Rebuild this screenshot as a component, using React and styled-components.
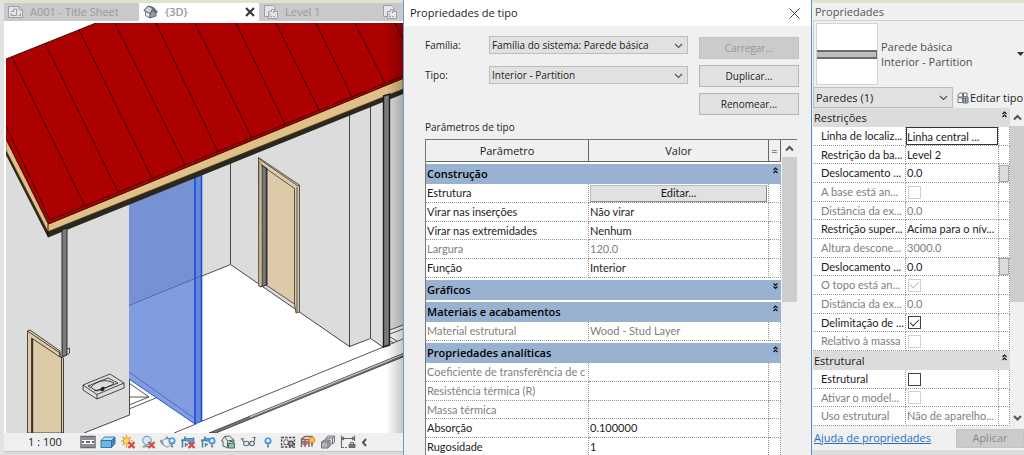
import React from 'react';
import styled, { createGlobalStyle, css } from 'styled-components';

const GlobalStyle = createGlobalStyle`
  * {
    box-sizing: border-box;
  }

  body {
    margin: 0;
    background: #e2e2e2;
    color: #1c1c1c;
    font-family: 'Open Sans', 'Noto Sans', sans-serif;
    font-size: 11px;
    line-height: 16px;
  }

  button, select, input {
    margin: 0;
    color: inherit;
    font: inherit;
  }
`;

const Page = styled.div`
  display: flex;
  height: 100vh;
  min-height: 455px;
  overflow: hidden;
`;

/* ---------- 3D view ---------- */

const ViewArea = styled.section`
  display: flex;
  flex: 1;
  flex-direction: column;
  min-width: 0;
  padding-left: 4px;
  border-top: 3px solid #dde3cd;
`;

const Tabs = styled.nav`
  display: flex;
  height: 20px;
  overflow: hidden;
  background: #c9c9c9;
  border-bottom: 2px solid #fff;
`;

const Tab = styled.button`
  display: flex;
  flex: none;
  align-items: center;
  gap: 6px;
  width: ${(props) => props.$width};
  padding: 0 4px;
  border: 0;
  background: ${(props) => (props.$active ? '#fff' : '#c9c9c9')};
  color: #999;
  font-weight: ${(props) => (props.$active ? 600 : 400)};
  white-space: nowrap;

  svg:last-child:not(:first-child) {
    margin-left: auto;
  }
`;

const Scene = styled.svg`
  flex: 1;
  width: 100%;
  min-height: 0;
  background: #fff;
  border-left: 2px solid #fff;
`;

const ViewBar = styled.div`
  display: flex;
  align-items: center;
  gap: 4px;
  height: 18px;
  padding-left: 24px;
  background: #efefef;
`;

const Scale = styled.span`
  width: 48px;
`;

const Tool = styled.button`
  display: flex;
  flex: none;
  padding: 0;
  border: 0;
  background: none;
`;

const ViewFoot = styled.div`
  height: 4px;
  background: #dcdcdc;
  border-top: 1px solid #c4c4c4;
`;

/* ---------- type dialog ---------- */

const Dialog = styled.section`
  display: flex;
  flex: none;
  flex-direction: column;
  width: 409px;
  background: #f0f0f0;
  border-right: 1px solid #5690c4;
  border-left: 1px solid #5ea0d8;
`;

const DialogTitle = styled.header`
  display: flex;
  align-items: center;
  justify-content: space-between;
  height: 26px;
  padding: 0 11px 0 6px;
  background: #fff;

  h1 {
    margin: 0;
    font-size: 11px;
    font-weight: 400;
  }
`;

const CloseButton = styled.button`
  display: flex;
  padding: 0;
  border: 0;
  background: none;
`;

const DialogBody = styled.div`
  flex: 1;
  min-height: 0;
  padding: 10px 12px 0 21px;
  overflow: hidden;
`;

const TypeForm = styled.div`
  display: flex;
  gap: 11px;
  font-size: 10px;
`;

const Fields = styled.div`
  display: flex;
  flex: 1;
  flex-direction: column;
  gap: 12px;
`;

const Field = styled.label`
  display: flex;
  align-items: center;

  span {
    width: 64px;
  }
`;

const SelectBox = styled.span`
  display: flex;
  flex: 1;
  align-items: center;
  height: ${(props) => props.$height};
  background: #e1e1e1;
  border: 1px solid #bdbdbd;

  select {
    flex: 1;
    width: 100%;
    height: 100%;
    padding: 0 0 0 2px;
    border: 0;
    outline: 0;
    appearance: none;
    background: none;
  }

  svg {
    flex: none;
    margin: 0 4px;
    pointer-events: none;
  }
`;

const Buttons = styled.div`
  display: flex;
  flex-direction: column;
  gap: 6px;
  width: 100px;
  padding-top: 1px;
`;

const DialogButton = styled.button`
  height: 22px;
  padding: 0;
  background: #e1e1e1;
  border: 1px solid #b5b5b5;

  &:disabled {
    background: #cbcbcb;
    border-color: #c4c4c4;
    color: #969696;
  }
`;

const TableLabel = styled.p`
  margin: 4px 0;
  font-size: 10px;
`;

const TableFrame = styled.div`
  display: flex;
  gap: 1px;
  width: 372px;
  border-top: 1px solid #777;
  border-left: 1px solid #777;
`;

const cell = css`
  height: 19px;
  overflow: hidden;
  border-right: 1px dotted #999;
  border-bottom: 1px dotted #999;
  font-family: Lato, sans-serif;
  line-height: 16px;
  white-space: nowrap;
`;

const ParamTable = styled.table`
  flex: 1;
  width: 100%;
  min-width: 0;
  table-layout: fixed;
  border-spacing: 0;
  background: #fff;

  thead th {
    height: 22px;
    padding: 0;
    background: #f0f0f0;
    border-right: 1px solid #666;
    border-bottom: 1px solid #666;
    font-weight: 400;
  }

  tbody th {
    height: 22px;
    padding: 0 3px 0 1px;
    background: #9ab2d1;
    border-top: 2px solid #fff;
    color: #000;
    font-weight: 600;
    text-align: left;
  }

  td {
    padding: 0 1px;
    ${cell}
  }

  tr:nth-child(4) td {
    height: 18px;
  }
`;

const ParamRow = styled.tr`
  color: ${(props) => (props.$muted ? '#808080' : '#1c1c1c')};
`;

const GroupTitle = styled.span`
  display: flex;
  align-items: center;
  justify-content: space-between;

  button {
    display: flex;
    align-self: flex-start;
    padding: 1px 0 0;
    border: 0;
    background: none;
  }
`;

const EditButton = styled.button`
  display: block;
  width: 100%;
  height: 17px;
  padding: 0;
  background: #e1e1e1;
  border: 1px solid #bbb;
  border-right-color: #888;
  border-bottom-color: #888;
  line-height: 14px;
`;

const ScrollTrack = styled.div`
  flex: none;
  width: 15px;
  background: #f0f0f0;

  svg {
    display: block;
    margin: 4px auto 4px;
  }
`;

const ScrollThumb = styled.div`
  height: ${(props) => props.$height};
  background: #cdcdcd;
`;

/* ---------- properties palette ---------- */

const Palette = styled.aside`
  display: flex;
  flex: none;
  flex-direction: column;
  width: 212px;
  padding-left: 1px;
  background: #f0f0f0;
  border-top: 3px solid #dde3cd;
  border-bottom: 5px solid #dcdcdc;
`;

const PaletteTitle = styled.h2`
  height: 18px;
  margin: 0;
  padding: 1px 2px;
  border-bottom: 1px solid #d0d0d0;
  color: #555;
  font-size: 11px;
  font-weight: 400;
`;

const TypePicker = styled.div`
  display: flex;
  align-items: center;
  gap: 3px;
  height: 66px;
  padding: 0 0 0 2px;
  border-left: 1px solid #d0d0d0;
  color: #4f4f4f;

  p {
    flex: 1;
    margin: 0;
    line-height: 15px;
  }
`;

const Preview = styled.div`
  display: flex;
  align-items: center;
  width: 62px;
  height: 62px;
  background: #fff;
  border: 1px solid #d3d3d3;
`;

const WallSection = styled.div`
  width: 100%;
  height: 9px;
  background: #bdbdbd;
  border: solid #6d6d6d;
  border-width: 2px 1px 2px 0;
`;

const FilterRow = styled.div`
  display: flex;
  align-items: center;
  gap: 4px;
  height: 21px;

  label {
    display: flex;
    width: 140px;
  }
`;

const EditType = styled.button`
  display: flex;
  align-items: center;
  gap: 1px;
  padding: 0;
  border: 0;
  background: none;
  white-space: nowrap;
`;

const PaletteGrid = styled.div`
  display: flex;
  flex: 1;
  min-height: 0;
  overflow: hidden;
`;

const PropTable = styled.table`
  flex: 1;
  align-self: flex-start;
  width: 100%;
  min-width: 0;
  table-layout: fixed;
  border-spacing: 0;
  background: #fff;

  th {
    height: 19px;
    padding: 0 3px 0 1px;
    background: #dcdcdc;
    font-weight: 400;
    text-align: left;
  }

  td {
    padding: 0;
    ${cell}
  }

  td:first-child {
    padding-left: 8px;
  }

  output {
    padding-left: 1px;
  }

  tr:nth-child(3n) td {
    height: 18px;
  }
`;

const CellInput = styled.input`
  display: block;
  width: 100%;
  height: 18px;
  padding: 0;
  background: #fff;
  border: 1px solid #333;
  outline: 0;
`;

const CellButton = styled.button`
  display: block;
  width: 100%;
  height: 17px;
  padding: 0;
  background: #dcdcdc;
  border: 1px solid #aaa;
`;

const Check = styled.input`
  display: grid;
  place-items: center;
  width: 13px;
  height: 13px;
  appearance: none;
  background: #fff;
  border: 1px solid #444;

  td > & {
    margin-left: 2px;
  }

  &:disabled {
    border-color: #d0d0d0;
  }

  &:checked::after {
    width: 8px;
    height: 4px;
    margin-bottom: 3px;
    border: solid #333;
    border-width: 0 0 1px 1px;
    content: '';
    transform: rotate(-45deg);
  }

  &:disabled:checked::after {
    border-color: #bbb;
  }
`;

const PaletteScroll = styled(ScrollTrack)`
  display: flex;
  flex-direction: column;
  width: 14px;

  svg {
    margin: 5px auto 4px;
  }

  svg:last-child {
    margin-top: auto;
  }
`;

const PaletteFoot = styled.footer`
  display: flex;
  flex: none;
  align-items: center;
  justify-content: space-between;
  height: 24px;
  padding-left: 1px;

  a {
    color: #1c6fc4;
  }
`;

const ApplyButton = styled.button`
  width: 68px;
  height: 19px;
  padding: 0;
  background: #cbcbcb;
  border: 1px solid #c4c4c4;
  color: #8a8a8a;
`;

/* ---------- small icons ---------- */

const Chevron = ({ up, left, color = '#555', bold }) => (
  <svg width="9" height="9" viewBox="0 0 9 9" fill="none" stroke={color} strokeWidth={bold ? 2 : 1.2} aria-hidden="true">
    <path d={left ? 'M6 1L3 4.500L6 8' : up ? 'M1 6.500L4.500 3L8 6.500' : 'M1 3L4.500 6.500L8 3'} />
  </svg>
);

const DoubleChevron = ({ down }) => (
  <svg width="5" height="7" viewBox="0 0 5 7" fill="none" stroke="#111" strokeWidth="1.200" aria-hidden="true">
    <path d={down ? 'M.5 .5L2.500 2.500L4.500 .5M.5 3.500L2.500 5.500L4.500 3.500' : 'M.5 3L2.500 1L4.500 3M.5 6L2.500 4L4.500 6'} />
  </svg>
);

const SheetIcon = () => (
  <svg width="16" height="14" viewBox="0 0 16 14" fill="#e4e6ea" stroke="#9a9ea6" aria-hidden="true">
    <path d="M.5 1.500H11L14.500 5V12.500H.5Z" />
    <path d="M11 1.500V5H14.500M3 8V10.500H8.500V4H5.500V6.500H3M10.500 10.500H12.500V8" fill="none" />
  </svg>
);

const HouseIcon = () => (
  <svg width="16" height="14" viewBox="0 0 16 14" stroke="#555" strokeWidth=".8" aria-hidden="true">
    <path d="M2.500 6V10.500L7 13V8Z" fill="#eee" />
    <path d="M7 8L10 4.500L13 7V11L7 13Z" fill="#8f9bab" />
    <path d="M1 5.500L5 1L10.500 2.500L14.500 7L12.500 8L9.800 5L7 8.500Z" fill="#737b86" />
    <path d="M1 5.500L5 1L9.800 3.500L7 8.500Z" fill="#cfd3d9" />
  </svg>
);

const PlanIcon = () => (
  <svg width="16" height="14" viewBox="0 0 16 14" fill="#e4e6ea" stroke="#9a9ea6" aria-hidden="true">
    <path d="M1.500 .5H10L12 2.500V11.500H1.500Z" />
    <path d="M5.500 6.500H8.500V4.500H11.500V6.500H14.500V13.500H5.500Z" />
    <path d="M7 8.500V11.500H13M10.500 6V9" fill="none" strokeDasharray="2 1" />
  </svg>
);

const CloseTabIcon = () => (
  <svg width="10" height="10" viewBox="0 0 10 10" stroke="#333" strokeWidth="2" aria-hidden="true">
    <path d="M1 1L9 9M9 1L1 9" />
  </svg>
);

const CloseIcon = () => (
  <svg width="11" height="11" viewBox="0 0 11 11" stroke="#444" aria-hidden="true">
    <path d="M.5 .5L10.500 10.500M10.500 .5L.5 10.500" />
  </svg>
);

const EditTypeIcon = () => (
  <svg width="12" height="12" viewBox="0 0 12 12" fill="#fff" stroke="#5a6270" strokeWidth=".9" aria-hidden="true">
    <path d="M1 3L3 1H5.500V5H1ZM6.500 1H10V5H6.500ZM1 6H5.500V10.500H1Z" />
    <path d="M6 5H11V11H6Z" fill="#d5deec" />
    <path d="M6 7H11M6 9H11M8.500 5V11" />
  </svg>
);

const RedCross = () => <path d="M8.500 8L14.500 14M14.500 8L8.500 14" stroke="#dc4840" strokeWidth="2.400" />;

const Bulb = ({ x = 0 }) => (
  <g transform={`translate(${x} 0)`}>
    <circle cx="8" cy="7" r="3.200" fill="#62aeee" stroke="#3b86c8" strokeWidth=".8" />
    <circle cx="8" cy="6.500" r="1.500" fill="#e9f6ff" />
    <path d="M7 11H9M7 12.700H9" stroke="#666" strokeWidth="1.200" />
  </g>
);

const CropFrame = () => (
  <g fill="none">
    <path d="M2.500 13.500V6H5M5 2.500V5M5 10.500H8M13.500 3.500V7" stroke="#6a7887" strokeWidth="1.600" />
    <path d="M5 4.500H13.500V9H10V7H5Z" fill="#5da6e3" stroke="#2f78b6" strokeWidth=".8" />
    <path d="M1 6.500H4.500M5.500 9V13" stroke="#3f86c0" strokeWidth="1.400" />
  </g>
);

const viewTools = [
  ['Nível de detalhe', (
    <g>
      <path d="M1 2.500H15V13.500H1Z" fill="#fff" stroke="#666" strokeWidth="1.400" />
      <path d="M2 3H14V6H2ZM2 10H14V13H2Z" fill="#8a8f96" />
      <path d="M2 7H4V9H2ZM6 7H10V9H6ZM12 7H14V9H12Z" fill="#666" />
    </g>
  )],
  ['Estilo visual', (
    <g stroke="#2c6d9d" strokeWidth=".9">
      <path d="M1 6.500L4.500 3H15L11.500 6.500Z" fill="#b9e1f5" />
      <path d="M1 6.500H11.500V13.500H1Z" fill="#6bb8e4" />
      <path d="M11.500 6.500L15 3V9.500L11.500 13.500Z" fill="#3d88bb" />
    </g>
  )],
  ['Caminho do sol', (
    <g>
      <path d="M6.500 1V3M1 7H3M2.500 3L4 4.500M10.500 3L9 4.500M2.500 11L4 9.500M6.500 11V13.500M11 6.500H12.500" stroke="#d89a2a" strokeWidth="1.200" />
      <circle cx="6.500" cy="7" r="3.200" fill="#ffd76a" stroke="#dc9c2b" />
      <RedCross />
    </g>
  )],
  ['Sombras', (
    <g>
      <path d="M2 13.500C3 10.500 8 10.500 11 13Z" fill="#8d949c" />
      <circle cx="7" cy="6.500" r="4.300" fill="#d3e9f8" stroke="#4e8ebd" />
      <RedCross />
    </g>
  )],
  ['Renderização', (
    <g>
      <path d="M2.500 6.500C2.500 15 11.500 15 11.500 6.500C9 4 5 4 2.500 6.500ZM2.500 7.500L.5 6L1 9L3.500 11M6 4.500L7 2.500L8.500 4.500" fill="#e8eef3" stroke="#7b838b" />
      <Bulb x={4} />
    </g>
  )],
  ['Cortar vista', <g><CropFrame /><RedCross /></g>],
  ['Região de recorte', <g><CropFrame /><Bulb x={4} /></g>],
  ['Vista 3D bloqueada', (
    <g stroke="#59616a">
      <path d="M1.500 7L4.500 2.500L9.500 2L14 6V10L8 14L3 12V7Z" fill="#e7eaee" />
      <path d="M4.500 2.500L7.500 7V13M7.500 7L14 6" fill="none" />
      <path d="M8.500 9.500H14.500V14H8.500Z" fill="#8fc4ab" stroke="#3f7a64" />
      <path d="M10 9.500V7.500H13V9.500" fill="none" stroke="#3f7a64" />
    </g>
  )],
  ['Isolar temporariamente', (
    <g fill="#dceefa" stroke="#5d6b78" strokeWidth="1.100">
      <path d="M4 8L1.500 5L4 4.500M9 9.500L10 9M14 8L15 3.500L12.500 3.500" fill="none" />
      <ellipse cx="6.300" cy="9.500" rx="2.700" ry="2.200" />
      <ellipse cx="12" cy="9.500" rx="2.300" ry="2.200" />
    </g>
  )],
  ['Revelar elementos', <Bulb />],
  ['Propriedades temporárias', (
    <g fill="none" stroke="#4a4f55" strokeWidth="1.300">
      <path d="M1.500 3.500H14.500V13H1.500Z" fill="#e9e9e9" strokeDasharray="2.500 1.200" />
      <path d="M4 6H8V10.500H4Z" fill="#fff" strokeWidth=".8" />
      <circle cx="11" cy="9.500" r="2.300" fill="#aaa" />
    </g>
  )],
  ['Modelo analítico', (
    <g>
      <path d="M1.500 13V5L5 2.500H12V11M1.500 5.500H9V13M5 5.500V13M9 5.500L12 3M1.500 9H9" fill="none" stroke="#7f6a68" strokeWidth="1.500" />
      <path d="M2 7.500H8M3 10.500H7" stroke="#d2554c" strokeWidth="1.200" />
      <circle cx="12" cy="6" r="3" fill="#ffbd45" stroke="#db8727" strokeWidth=".8" />
      <path d="M11 10H13M11 12H13" stroke="#555" />
    </g>
  )],
  ['Conjuntos de deslocamento', (
    <g fill="#dfe1e4" stroke="#707479">
      <path d="M6 4L8 2H14.500V8L12.500 10H6Z" />
      <path d="M1.500 8L4 6H10V12L8 14H1.500Z" fill="#b1b5ba" />
      <path d="M1.500 8H8V14M8 8L10 6M12.500 4V10M6 4H12.500L14.500 2" fill="none" />
    </g>
  )],
  ['Revelar restrições', (
    <g stroke="#666" fill="none">
      <path d="M1.500 1.500V14M14.500 1.500V7M1.500 4.500H14.500M4 3L2 4.500L4 6M12 3L14 4.500L12 6" strokeWidth="1.100" />
      <path d="M2 13.500H8" strokeDasharray="2 1" />
      <path d="M9 10.500H15V13.500H9Z" fill="#777" />
      <path d="M10.500 10.500V8.500H13.500V10.500" />
    </g>
  )],
];

const roofSeams = [
  [12, 57, 85, 206], [45, 43, 118, 192], [79, 30, 152, 178], [115, 23, 185, 165],
  [156, 23, 218, 152], [195, 23, 252, 138], [236, 23, 285, 124], [276, 23, 319, 110],
  [316, 23, 352, 97], [355, 23, 385, 83], [395, 23, 403, 39],
];

const House = () => (
  <Scene viewBox="6 23 397 410" preserveAspectRatio="xMinYMin slice" role="img" aria-label="Vista 3D">
    <defs>
      <linearGradient id="edge" x1="0" x2="1">
        <stop offset="0" stopColor="#000" stopOpacity="0" />
        <stop offset="1" stopColor="#000" stopOpacity=".22" />
      </linearGradient>
    </defs>

    {/* walls */}
    <path d="M129 200L403 85V326L390 330V347L383 347L370 338L350 347L230 264L129 305Z" fill="#dcdcdc" />
    <path d="M6 140L48 234L129 200V415L84 433H6Z" fill="#dcdcdc" />
    <g fill="none" stroke="#333" strokeWidth=".9">
      <path d="M129.500 200V415L84 433M129 305.500L230.500 264.500L349.500 346.500L370.500 338.500L383 347" />
      <path d="M230.500 160V264M349.500 110V347M370.500 100V338" />
    </g>

    {/* floor */}
    <g fill="none" stroke="#444" strokeWidth=".9">
      <path d="M201 421.500L403 339M174 433L196 424M390 330L403 325M390 334L403 329M390 337L397 341M390 341L394 343" />
      <path d="M129 383L149 397L129 405M129 397H149M129 409L157 397.500" />
    </g>
    <path d="M209 433L403 353.500V357L216 433Z" fill="#777" stroke="#222" strokeWidth=".7" />
    <path d="M250 417L403 354.500" stroke="#eee" strokeWidth=".8" />

    {/* inner door */}
    <g stroke="#333" strokeWidth=".8">
      <path d="M258.500 157.500L299.500 185V312L296 313L294.500 304L266 285L260 287L258.500 285Z" fill="#dccaa9" />
      <path d="M262 165L267 168.500V285L262 286.500Z" fill="#777" />
      <path d="M259 161L262 164.500V286H258.500Z" fill="#c8b58f" strokeWidth=".4" />
      <path d="M261 165L294.500 188.500V304M297 187V312M258.500 158.500L298 186L299.500 185" fill="none" />
      <path d="M266.500 168V285" strokeWidth="1.400" />
    </g>

    {/* selected wall */}
    <path d="M129 204L195 173L202 170V276L129 305Z" fill="#7692d4" />
    <path d="M129 305L202 276V421L195 424L129 379Z" fill="#7f9de0" />
    <path d="M195 173H202V421L195 424Z" fill="#6388df" />
    <path d="M129 305.500L201 276M129 372L194 418" fill="none" stroke="#47609f" strokeWidth=".8" />
    <path d="M129 379L195 424L202 421" fill="none" stroke="#2657d2" />
    <path d="M195 172V424M201.500 170V421" stroke="#1b4dcc" strokeWidth="1.600" />

    {/* roof */}
    <path d="M6 150L48 231L403 88V94L48 237.500L6 155Z" fill="#2b261e" />
    <path d="M6 138L48 224L403 78V89L48 231.500L6 150Z" fill="#dfc087" stroke="#5b4320" strokeWidth=".6" />
    <path d="M6 59L96 23H403V78.500L48.500 224L6 139Z" fill="#ad0000" />
    <g fill="none" stroke="#300" strokeWidth=".9">
      <path d="M6 59L96 23M6 126L50 220L403 76M48 224V236M6 139L48.500 224L403 78.500" />
      {roofSeams.map(([x1, y1, x2, y2]) => (
        <line key={x1} x1={x1} y1={y1} x2={x2} y2={y2} />
      ))}
    </g>

    {/* posts */}
    <g stroke="#1c1c1c">
      <path d="M62 230L67 228V355L62 357Z" fill="#7b7b7b" strokeWidth=".9" />
      <path d="M383.500 96L389.500 94V345L383.500 347Z" fill="#7b7b7b" strokeWidth="1.400" />
    </g>

    {/* outer door */}
    <g stroke="#3a3329" strokeWidth=".9">
      <path d="M27.500 433V331L30 330L60 351V357L63.500 358V433Z" fill="#dccaa9" />
      <path d="M27.500 331L60 353V357L31.500 338V433" fill="none" />
      <path d="M32.500 339V433" strokeWidth="1.400" />
      <path d="M61.500 357V433M67.500 349L69.500 348V353L67.500 355" fill="none" />
    </g>

    {/* basin */}
    <g fill="none" stroke="#222" strokeWidth=".8">
      <path d="M83 385L110 374L124 383V388L97 399L83 390ZM83 385L97 394.500L124 383M97 394.500V399" />
      <path d="M88 386L108 378L118 383L97 391ZM91 387C98 380 106 379 114 383C112 386 102 389 94 391" />
      <path d="M101 388V391L104 390V387Z" fill="#222" />
    </g>

    <rect x="386" y="23" width="17" height="410" fill="url(#edge)" />
  </Scene>
);

/* ---------- data ---------- */

const typeGroups = [
  {
    name: 'Construção',
    rows: [
      ['Estrutura', null],
      ['Virar nas inserções', 'Não virar'],
      ['Virar nas extremidades', 'Nenhum'],
      ['Largura', '120.0', true],
      ['Função', 'Interior'],
    ],
  },
  { name: 'Gráficos', closed: true, rows: [] },
  { name: 'Materiais e acabamentos', rows: [['Material estrutural', 'Wood - Stud Layer', true]] },
  {
    name: 'Propriedades analíticas',
    rows: [
      ['Coeficiente de transferência de c', '', true],
      ['Resistência térmica (R)', '', true],
      ['Massa térmica', '', true],
      ['Absorção', '0.100000'],
      ['Rugosidade', '1'],
    ],
  },
];

const instanceGroups = [
  {
    name: 'Restrições',
    rows: [
      { name: 'Linha de localiz...', value: 'Linha central ...', active: true },
      { name: 'Restrição da ba...', value: 'Level 2' },
      { name: 'Deslocamento ...', value: '0.0', button: true },
      { name: 'A base está an...', check: true, muted: true },
      { name: 'Distância da ex...', value: '0.0', muted: true },
      { name: 'Restrição super...', value: 'Acima para o nív...' },
      { name: 'Altura descone...', value: '3000.0', muted: true },
      { name: 'Deslocamento ...', value: '0.0', button: true },
      { name: 'O topo está an...', check: true, checked: true, muted: true },
      { name: 'Distância da ex...', value: '0.0', muted: true },
      { name: 'Delimitação de ...', check: true, checked: true },
      { name: 'Relativo à massa', check: true, muted: true },
    ],
  },
  {
    name: 'Estrutural',
    rows: [
      { name: 'Estrutural', check: true },
      { name: 'Ativar o model...', check: true, muted: true },
      { name: 'Uso estrutural', value: 'Não de aparelho...', muted: true },
    ],
  },
];

const TypeDialog = () => (
  <Dialog role="dialog" aria-label="Propriedades de tipo">
    <DialogTitle>
      <h1>Propriedades de tipo</h1>
      <CloseButton aria-label="Fechar"><CloseIcon /></CloseButton>
    </DialogTitle>
    <DialogBody>
      <TypeForm>
        <Fields>
          <Field>
            <span>Família:</span>
            <SelectBox $height="18px">
              <select><option>Família do sistema: Parede básica</option></select>
              <Chevron />
            </SelectBox>
          </Field>
          <Field>
            <span>Tipo:</span>
            <SelectBox $height="18px">
              <select><option>Interior - Partition</option></select>
              <Chevron />
            </SelectBox>
          </Field>
        </Fields>
        <Buttons>
          <DialogButton disabled>Carregar...</DialogButton>
          <DialogButton>Duplicar...</DialogButton>
          <DialogButton>Renomear...</DialogButton>
        </Buttons>
      </TypeForm>
      <TableLabel>Parâmetros de tipo</TableLabel>
      <TableFrame>
        <ParamTable>
          <colgroup>
            <col width="163" />
            <col />
            <col width="12" />
          </colgroup>
          <thead>
            <tr>
              <th>Parâmetro</th>
              <th>Valor</th>
              <th>=</th>
            </tr>
          </thead>
          {typeGroups.map((group) => (
            <tbody key={group.name}>
              <tr>
                <th colSpan={3}>
                  <GroupTitle>
                    {group.name}
                    <button aria-label={group.name}><DoubleChevron down={group.closed} /></button>
                  </GroupTitle>
                </th>
              </tr>
              {group.rows.map(([name, value, muted]) => (
                <ParamRow key={name} $muted={muted}>
                  <td>{name}</td>
                  <td>{value === null ? <EditButton>Editar...</EditButton> : value}</td>
                  <td />
                </ParamRow>
              ))}
            </tbody>
          ))}
        </ParamTable>
        <ScrollTrack>
          <Chevron up bold />
          <ScrollThumb $height="145px" />
        </ScrollTrack>
      </TableFrame>
    </DialogBody>
  </Dialog>
);

const PropertyRow = ({ row, id }) => (
  <ParamRow $muted={row.muted}>
    <td><label htmlFor={id}>{row.name}</label></td>
    <td>
      {row.check && <Check id={id} type="checkbox" defaultChecked={row.checked} disabled={row.muted} />}
      {row.active && <CellInput id={id} defaultValue={row.value} />}
      {!row.check && !row.active && <output id={id}>{row.value}</output>}
    </td>
    <td>{row.button && <CellButton aria-label={row.name} />}</td>
  </ParamRow>
);

const PropertiesPalette = () => (
  <Palette>
    <PaletteTitle>Propriedades</PaletteTitle>
    <TypePicker>
      <Preview><WallSection /></Preview>
      <p>Parede básica<br />Interior - Partition</p>
      <svg width="7" height="5" viewBox="0 0 7 5" aria-hidden="true"><path d="M0 0H7L3.500 4Z" fill="#333" /></svg>
    </TypePicker>
    <FilterRow>
      <label>
        <SelectBox $height="21px">
          <select aria-label="Filtro"><option>Paredes (1)</option></select>
          <Chevron />
        </SelectBox>
      </label>
      <EditType><EditTypeIcon />Editar tipo</EditType>
    </FilterRow>
    <PaletteGrid>
      <PropTable>
        <colgroup>
          <col width="93" />
          <col />
          <col width="11" />
        </colgroup>
        {instanceGroups.map((group, g) => (
          <tbody key={group.name}>
            <tr>
              <th colSpan={3}>
                <GroupTitle>
                  {group.name}
                  <button aria-label={group.name}><DoubleChevron /></button>
                </GroupTitle>
              </th>
            </tr>
            {group.rows.map((row, i) => (
              <PropertyRow key={i} row={row} id={`prop-${g}-${i}`} />
            ))}
          </tbody>
        ))}
      </PropTable>
      <PaletteScroll>
        <Chevron up bold />
        <ScrollThumb $height="176px" />
        <Chevron bold />
      </PaletteScroll>
    </PaletteGrid>
    <PaletteFoot>
      <a href="#ajuda">Ajuda de propriedades</a>
      <ApplyButton disabled>Aplicar</ApplyButton>
    </PaletteFoot>
  </Palette>
);

const App = () => (
  <>
    <GlobalStyle />
    <Page>
      <ViewArea>
        <Tabs>
          <Tab $width="135px"><SheetIcon />A001 - Title Sheet</Tab>
          <Tab $width="120px" $active><HouseIcon />{'{3D}'}<CloseTabIcon /></Tab>
          <Tab $width="119px"><PlanIcon />Level 1</Tab>
          <Tab $width="119px" aria-label="Level 2"><PlanIcon /></Tab>
        </Tabs>
        <House />
        <ViewBar>
          <Scale>1 : 100</Scale>
          {viewTools.map(([label, drawing]) => (
            <Tool key={label} aria-label={label}>
              <svg width="16" height="16" viewBox="0 0 16 16">{drawing}</svg>
            </Tool>
          ))}
          <Tool aria-label="Recolher"><Chevron left bold /></Tool>
        </ViewBar>
        <ViewFoot />
      </ViewArea>
      <TypeDialog />
      <PropertiesPalette />
    </Page>
  </>
);

export default App;
